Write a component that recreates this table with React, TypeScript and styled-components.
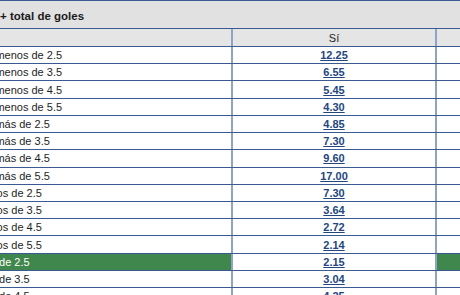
import React from 'react';
import styled, { createGlobalStyle, css } from 'styled-components';

const GlobalStyle = createGlobalStyle`
  html, body {
    margin: 0;
    padding: 0;
    background: #ffffff;
    overflow: hidden;
  }
  body {
    font-family: "Liberation Sans", Arial, sans-serif;
  }
  *, *::before, *::after {
    box-sizing: border-box;
  }
`;

const lineBlue = '#3a5b92';
const colLine = '#8ea3c6';
const green = '#3f874c';

const StyledTable = styled.div`
  width: 460px;
  border-top: 1px solid ${lineBlue};
`;

const StyledTitleBar = styled.div`
  height: 28px;
  display: flex;
  align-items: center;
  padding-top: 2px;
  background: #e1e1e1;
  border-bottom: 1px solid ${lineBlue};
  font-size: 11.5px;
  font-weight: bold;
  color: #1a1a1a;
  white-space: nowrap;
`;

const StyledRow = styled.div<{ $head?: boolean }>`
  display: grid;
  grid-template-columns: 231px 204px 1fr;
  height: ${(p) => (p.$head ? '18px' : '17.22px')};
  border-bottom: 1px solid ${lineBlue};
  background: ${(p) => (p.$head ? '#e5e5e5' : '#ffffff')};
`;

const cellBase = css`
  display: flex;
  align-items: center;
  overflow: hidden;
  white-space: nowrap;
  font-size: 11px;
`;

const StyledLabel = styled.div<{ $selected?: boolean }>`
  ${cellBase};
  color: ${(p) => (p.$selected ? '#ffffff' : '#1e1e1e')};
  background: ${(p) => (p.$selected ? green : 'transparent')};
`;

const StyledLabelText = styled.span<{ $indent: number }>`
  margin-left: ${(p) => p.$indent}px;
`;

const StyledOddsCell = styled.div`
  ${cellBase};
  justify-content: center;
  border-left: 2px solid ${colLine};
  background: #ffffff;
`;

const StyledHeadCell = styled.div`
  ${cellBase};
  justify-content: center;
  border-left: 2px solid ${colLine};
  color: #1e1e1e;
`;

const StyledOdds = styled.a`
  font-weight: bold;
  color: #234680;
  text-decoration: underline;
  cursor: pointer;
`;

const StyledSideCell = styled.div<{ $selected?: boolean }>`
  ${cellBase};
  border-left: 2px solid ${colLine};
  background: ${(p) => (p.$selected ? green : 'transparent')};
`;

type Line = { label: string; odds: string; indent: number; selected?: boolean };

const lines: Line[] = [
  { label: 'menos de 2.5', odds: '12.25', indent: -4.6 },
  { label: 'menos de 3.5', odds: '6.55', indent: -4.6 },
  { label: 'menos de 4.5', odds: '5.45', indent: -4.6 },
  { label: 'menos de 5.5', odds: '4.30', indent: -4.6 },
  { label: 'más de 2.5', odds: '4.85', indent: -4.6 },
  { label: 'más de 3.5', odds: '7.30', indent: -4.6 },
  { label: 'más de 4.5', odds: '9.60', indent: -4.6 },
  { label: 'más de 5.5', odds: '17.00', indent: -4.6 },
  { label: 'menos de 2.5', odds: '7.30', indent: -24.8 },
  { label: 'menos de 3.5', odds: '3.64', indent: -24.8 },
  { label: 'menos de 4.5', odds: '2.72', indent: -24.8 },
  { label: 'menos de 5.5', odds: '2.14', indent: -24.8 },
  { label: 'más de 2.5', odds: '2.15', indent: -24.8, selected: true },
  { label: 'más de 3.5', odds: '3.04', indent: -24.8 },
  { label: 'más de 4.5', odds: '4.25', indent: -24.8 },
];

export default function App() {
  return (
    <>
      <GlobalStyle />
      <StyledTable>
        <StyledTitleBar>+ total de goles</StyledTitleBar>
        <StyledRow $head>
          <StyledLabel />
          <StyledHeadCell>Sí</StyledHeadCell>
          <StyledSideCell />
        </StyledRow>
        {lines.map((line, i) => (
          <StyledRow key={i}>
            <StyledLabel $selected={line.selected}>
              <StyledLabelText $indent={line.indent}>{line.label}</StyledLabelText>
            </StyledLabel>
            <StyledOddsCell>
              <StyledOdds>{line.odds}</StyledOdds>
            </StyledOddsCell>
            <StyledSideCell $selected={line.selected} />
          </StyledRow>
        ))}
      </StyledTable>
    </>
  );
}
